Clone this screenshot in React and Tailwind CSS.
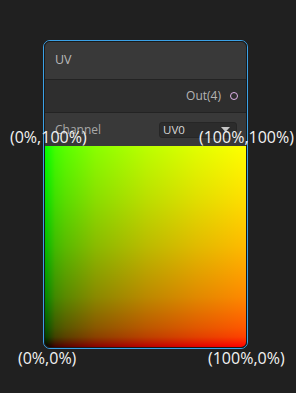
import React from "react";

export default function App() {
  return (
    <div className="relative w-[296px] h-[393px] bg-[#202020] pt-[40px] pl-[43px] font-['Open_Sans',sans-serif]">
      <div className="w-[205px] rounded-[7px] border border-[#3ba1e6]">
        <div className="flex flex-col overflow-hidden rounded-[6px] border border-[#1a1a1a]">
          <div className="flex h-[37px] items-center bg-[#393939] pl-[10px] text-[12.5px] text-[#b9b9b9]">
            UV
          </div>
          <div className="h-px bg-[#232323]" />
          <div className="flex h-[32px] items-center justify-end gap-[9px] bg-[#2e2e2e] pr-[8px] text-[12px] text-[#b4b4b4]">
            <span>Out(4)</span>
            <span className="h-[8px] w-[8px] rounded-full border border-[#e0b2ea]" />
          </div>
          <div className="h-px bg-[#232323]" />
          <div className="flex h-[33px] items-center justify-between bg-[#393939] pl-[10px] pr-[9px] text-[12px] text-[#a8a8a8]">
            <span>Channel</span>
            <div className="flex h-[16px] w-[78px] items-center justify-between rounded-[3px] border border-[#262626] bg-[#2c2c2c] pl-[3px] pr-[6px] text-[11.5px] text-[#d8d8d8]">
              <span>UV0</span>
              <svg width="9" height="5" viewBox="0 0 9 5">
                <path d="M0 0 L9 0 L4.5 5 Z" fill="#c6c6c6" />
              </svg>
            </div>
          </div>
          <div className="h-[201px] bg-blend-screen [background-image:linear-gradient(to_right,rgb(0,0,0),rgb(65,0,0)_5%,rgb(89,0,0)_10%,rgb(137,0,0)_25%,rgb(186,0,0)_50%,rgb(224,0,0)_75%,rgb(255,0,0)),linear-gradient(to_top,rgb(0,0,0),rgb(0,65,0)_5%,rgb(0,89,0)_10%,rgb(0,137,0)_25%,rgb(0,186,0)_50%,rgb(0,224,0)_75%,rgb(0,255,0))]" />
        </div>
      </div>
      <span className="absolute left-[10px] top-[129px] text-[16px] leading-none text-[#f2f2f2]">(0%,100%)</span>
      <span className="absolute left-[199px] top-[129px] text-[16px] leading-none text-[#f2f2f2]">(100%,100%)</span>
      <span className="absolute left-[18px] top-[350px] text-[16px] leading-none text-[#f2f2f2]">(0%,0%)</span>
      <span className="absolute left-[208px] top-[350px] text-[16px] leading-none text-[#f2f2f2]">(100%,0%)</span>
    </div>
  );
}
